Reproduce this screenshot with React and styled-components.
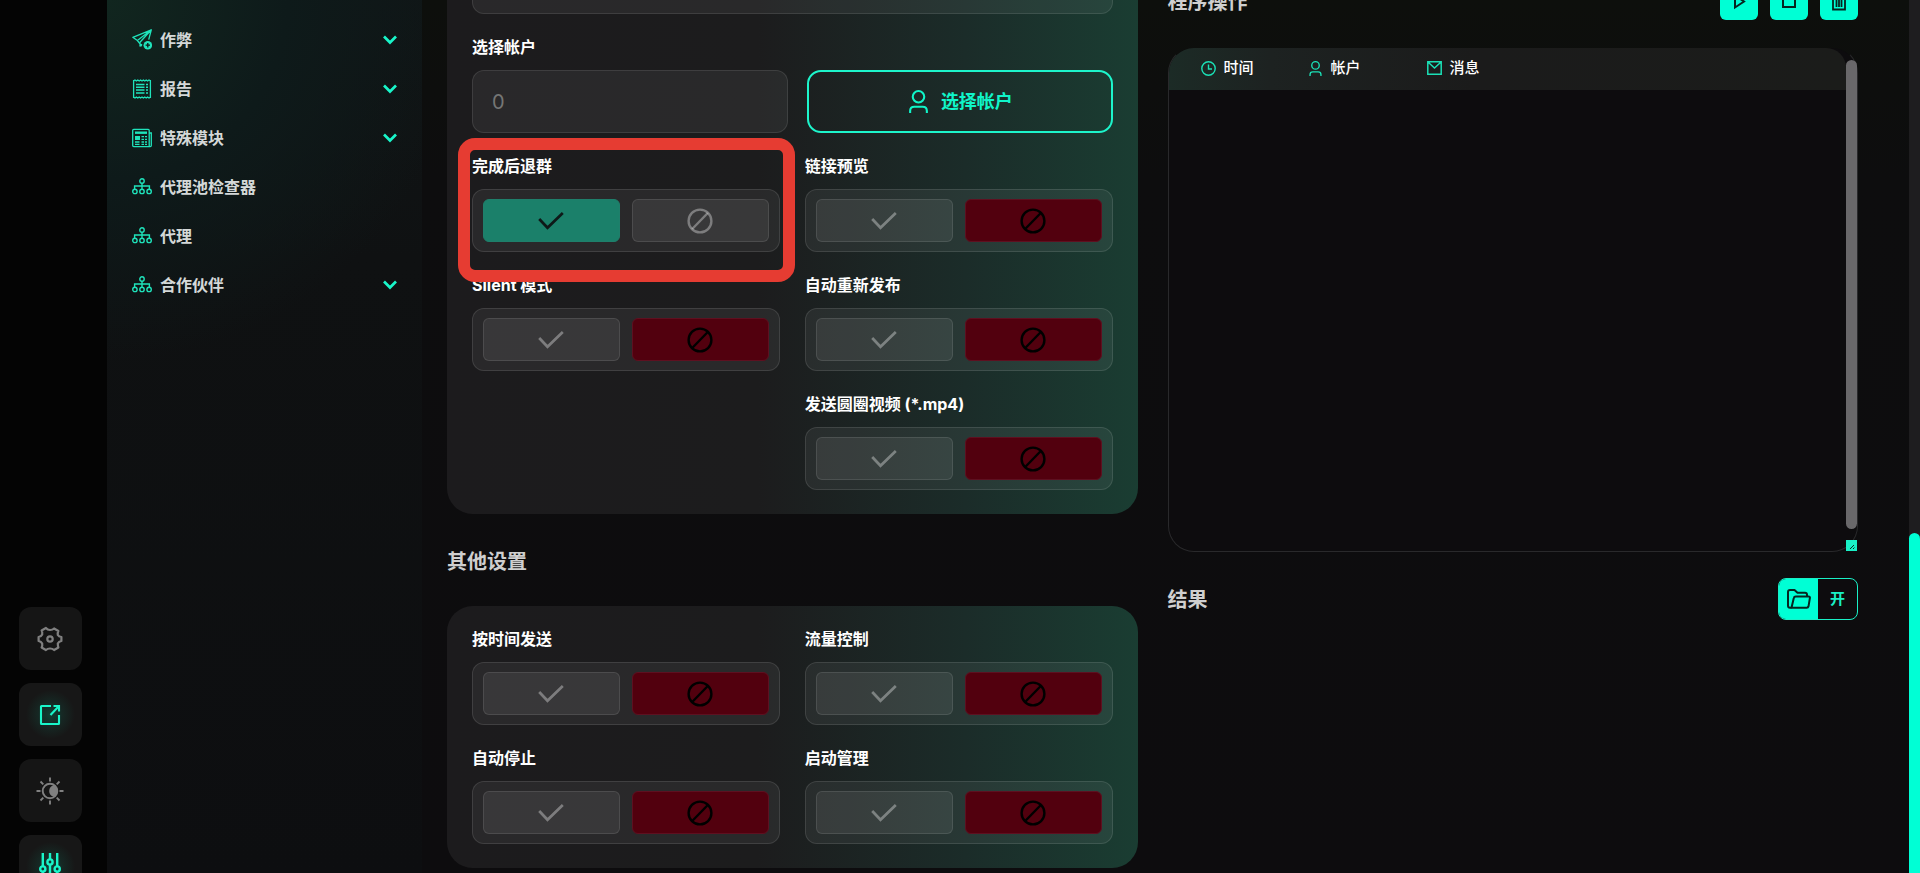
import React, { useState } from "react";
import styled, { createGlobalStyle } from "styled-components";

const menuList = [
  { id: "cheat", name: "作弊", icon: "plane", more: true },
  { id: "report", name: "报告", icon: "receipt", more: true },
  { id: "special", name: "特殊模块", icon: "news", more: true },
  { id: "pool", name: "代理池检查器", icon: "tree", more: false },
  { id: "proxy", name: "代理", icon: "tree", more: false },
  { id: "partner", name: "合作伙伴", icon: "tree", more: true },
];

const railList = [
  { id: "settings", name: "设置", icon: "gear", on: false },
  { id: "window", name: "窗口", icon: "external", on: true },
  { id: "theme", name: "主题", icon: "sun", on: false },
  { id: "filters", name: "调整", icon: "sliders", on: true },
];

const sendOptions = [
  { id: "leave", label: "完成后退群", value: true, marked: true },
  { id: "preview", label: "链接预览", value: false },
  { id: "silent", label: "Silent 模式", value: false },
  { id: "repost", label: "自动重新发布", value: false },
  { id: "round", label: "发送圆圈视频 (*.mp4)", value: false, right: true },
];

const otherOptions = [
  { id: "byTime", label: "按时间发送", value: false },
  { id: "traffic", label: "流量控制", value: false },
  { id: "autoStop", label: "自动停止", value: false },
  { id: "startup", label: "启动管理", value: false },
];

const icons = {
  plane: (
    <svg width="20" height="21" viewBox="0 0 20 21" fill="none" stroke="currentColor" strokeWidth="1.3" strokeLinejoin="round">
      <path d="M19.3.8.8 8.300l4.600 3.200L19.300.8 8 13.200M5.400 11.500l4.400 5.600M8 13.200v3.900l2-2M19.300.8l-2.600 9.800" />
      <circle cx="15.8" cy="16.2" r="4.3" fill="currentColor" stroke="none" />
      <path d="M15.8 14v4.400M13.600 16.200H18" stroke="#0d1917" />
    </svg>
  ),
  receipt: (
    <svg width="20" height="20" viewBox="0 0 20 20" fill="none" stroke="currentColor" strokeWidth="1.3">
      <path d="M1.600 1v18M18.400 1v18" />
      <path d="M1.6 1.8 3 1l1.4 1L5.8 1l1.4 1 1.4-1L10 2l1.4-1 1.4 1 1.4-1 1.4 1L17 1l1.4.8M1.6 18.2 3 19l1.4-1 1.4 1 1.4-1 1.4 1 1.4-1 1.4 1 1.4-1 1.4 1 1.4-1 1.4 1 1.4-.8" />
      <path d="M4 5.500h8.500M4 8.300h8.500M4 11.100h8.500M4 13.900h8.500M14 5.500h2M14 8.300h2M14 11.100h2M14 13.900h2" strokeWidth="1.5" />
    </svg>
  ),
  news: (
    <svg width="20" height="20" viewBox="0 0 20 20" fill="none" stroke="currentColor" strokeWidth="1.3">
      <path d="M17.200 16.400V2.400a1 1 0 0 0-1-1H1.700a1 1 0 0 0-1 1v15.200a1 1 0 0 0 1 1h16.600a1 1 0 0 0 1-1V5h-2.100v12.400c0 .6.4 1.200 1 1.200" />
      <path d="M3 4.700h12" strokeWidth="2.4" />
      <rect x="3" y="8" width="5" height="4" fill="currentColor" stroke="none" />
      <path d="M9.500 8.600H12M13 8.600h2M9.500 11.400H12M13 11.400h2M3 14h4.500M9.500 14H12M13 14h2M3 16.400h4.500M9.500 16.400H12M13 16.400h2" />
    </svg>
  ),
  tree: (
    <svg width="20" height="17" viewBox="0 0 20 17" fill="none" stroke="currentColor" strokeWidth="1.4">
      <circle cx="10" cy="3" r="2.2" />
      <circle cx="2.9" cy="13.4" r="2.2" />
      <circle cx="10" cy="13.4" r="2.2" />
      <circle cx="17.1" cy="13.4" r="2.2" />
      <path d="M10 5.300v5.800M2.600 11V8h14.800v3" />
    </svg>
  ),
  chevron: (
    <svg width="14" height="10" viewBox="0 0 14 10" fill="none" stroke="currentColor" strokeWidth="2.7">
      <path d="M1 1.500l6 6 6-6" />
    </svg>
  ),
  gear: (
    <svg width="26" height="26" viewBox="0 0 26 26" fill="none" stroke="currentColor" strokeWidth="2.2" strokeLinejoin="round">
      <path d="M24.4 11v4q-2.600.4-3.600 2.500 0 2.500.6 4l-4.300 2.500q-1.600-1.500-4.100-1.500t-4.100 1.500l-4.300-2.500q1-1.500.6-4-1-2.100-3.600-2.500v-4q2.600-.4 3.600-2.500.4-2.500-.6-4l4.300-2.500Q10.500 4 13 4t4.100-1.500l4.300 2.500q-.9 1.500-.6 4 1 1.600 3.600 2Z" />
      <circle cx="13" cy="13" r="2.700" />
    </svg>
  ),
  external: (
    <svg width="22" height="22" viewBox="0 0 22 22" fill="none" stroke="currentColor" strokeWidth="2.1">
      <path d="M12 2H2.500Q2 2 2 2.500v17q0 .5.500.5h17q.5 0 .5-.5V11M14.500 2H20v5.500M20 2l-8.500 9" />
    </svg>
  ),
  sun: (
    <svg width="28" height="28" viewBox="0 0 28 28" fill="none" stroke="currentColor" strokeWidth="1.9">
      <circle cx="14" cy="14" r="7.300" />
      <path d="M18.500 8.200a6.800 6.800 0 0 1 0 11.600c-3 0-5.300-2.600-5.300-5.800s2.300-5.800 5.300-5.800Z" fill="currentColor" stroke="none" />
      <path d="M14 .5v4M14 23.500v4M.5 14h4M23.500 14h4M4.500 4.500l2.800 2.800M20.700 20.700l2.800 2.800M4.500 23.500l2.800-2.800M20.700 7.300l2.800-2.800" />
    </svg>
  ),
  sliders: (
    <svg width="22" height="28" viewBox="0 0 22 28" fill="none" stroke="currentColor" strokeWidth="2.4">
      <path d="M3.800 0v13M11 0v6M18.200 0v13M3.800 19v9M11 12v16M18.200 19v9" />
      <circle cx="3.800" cy="16" r="2.600" />
      <circle cx="11" cy="9" r="2.600" />
      <circle cx="18.200" cy="16" r="2.600" />
    </svg>
  ),
  check: (
    <svg width="26" height="20" viewBox="0 0 26 20" fill="none" stroke="currentColor" strokeWidth="2.7">
      <path d="M1.200 8l8.300 8.800L24.800 2" />
    </svg>
  ),
  ban: (
    <svg width="26" height="26" viewBox="0 0 26 26" fill="none" stroke="currentColor" strokeWidth="2.4">
      <circle cx="13" cy="13" r="11.400" />
      <path d="M5.200 21 20.800 5" />
    </svg>
  ),
  play: (
    <svg width="14" height="18" viewBox="0 0 14 18" fill="none" stroke="currentColor" strokeWidth="2">
      <path d="M3 3.500v12l9-6Z" />
    </svg>
  ),
  stop: (
    <svg width="14" height="16" viewBox="0 0 14 16" fill="none" stroke="currentColor" strokeWidth="2">
      <path d="M1 1h12v13H1z" />
    </svg>
  ),
  trash: (
    <svg width="16" height="20" viewBox="0 0 16 20" fill="none" stroke="currentColor" strokeWidth="1.8">
      <path d="M0 4h16M5 4V1h6v3M2 4v14.500h12V4M5.500 6.500v9.500M8 6.500v9.500M10.500 6.500v9.500" />
    </svg>
  ),
  folder: (
    <svg width="24" height="20" viewBox="0 0 24 20" fill="none" stroke="currentColor" strokeWidth="2" strokeLinejoin="round">
      <path d="M4.500 18.800H3q-2 0-2-2V3q0-2 2-2h4.500l3 2.800H18q2 0 2 2v1.400" />
      <path d="M4.500 18.800 6.800 9q.3-1.600 2-1.600H21.500q1.700 0 1.400 1.600l-1.400 8.300q-.3 1.500-1.800 1.500Z" />
    </svg>
  ),
  clock: (
    <svg width="15" height="15" viewBox="0 0 15 15" fill="none" stroke="currentColor" strokeWidth="1.4">
      <circle cx="7.500" cy="7.500" r="6.700" />
      <path d="M7.500 3.500V8H11" />
    </svg>
  ),
  mail: (
    <svg width="15" height="14" viewBox="0 0 15 14" fill="none" stroke="currentColor" strokeWidth="1.5">
      <path d="M.8.8h13.400v12.400H.8zM1.500 1.500l6 5.500 6-5.500" />
    </svg>
  ),
};

function UserIcon({ size, stroke }) {
  return (
    <svg width={size} height={size} viewBox="0 0 22 22" fill="none" stroke="currentColor" strokeWidth={stroke}>
      <circle cx="11" cy="6.500" r="5.500" />
      <path d="M3 22v-2q0-4 4-4h8q4 0 4 4v2" />
    </svg>
  );
}

function Option({ item }) {
  const [value, setValue] = useState(item.value);
  const labelId = item.id + "-label";

  return (
    <Cell $marked={item.marked} $right={item.right}>
      <Label as="span" id={labelId}>{item.label}</Label>
      <Toggle role="group" aria-labelledby={labelId}>
        <YesButton type="button" aria-label="是" aria-pressed={value} $on={value} onClick={() => setValue(true)}>
          {icons.check}
        </YesButton>
        <NoButton type="button" aria-label="否" aria-pressed={!value} $on={!value} onClick={() => setValue(false)}>
          {icons.ban}
        </NoButton>
      </Toggle>
    </Cell>
  );
}

function App() {
  return (
    <Page>
      <GlobalStyle />
      <Rail>
        <RailList>
          {railList.map((item) => (
            <RailButton key={item.id} type="button" aria-label={item.name} $on={item.on}>
              {icons[item.icon]}
            </RailButton>
          ))}
        </RailList>
      </Rail>

      <Sidebar>
        {menuList.map((item) => (
          <MenuLink key={item.id} href={"#" + item.id}>
            <MenuIcon>{icons[item.icon]}</MenuIcon>
            <span>{item.name}</span>
            {item.more && <MenuArrow>{icons.chevron}</MenuArrow>}
          </MenuLink>
        ))}
      </Sidebar>

      <Content>
        <Column>
          <Card>
            <TopField aria-label="消息内容" />
            <div>
              <Label htmlFor="accounts">选择帐户</Label>
              <AccountRow>
                <TextInput id="accounts" placeholder="0" />
                <AccountButton type="button">
                  <UserIcon size={23} stroke={2} />
                  选择帐户
                </AccountButton>
              </AccountRow>
            </div>
            <Options>
              {sendOptions.map((item) => (
                <Option key={item.id} item={item} />
              ))}
            </Options>
          </Card>
          <CardTitle>其他设置</CardTitle>
          <Card>
            <Options>
              {otherOptions.map((item) => (
                <Option key={item.id} item={item} />
              ))}
            </Options>
          </Card>
        </Column>

        <ActionColumn>
          <TitleRow>
            <Title>程序操作</Title>
            <Actions>
              <ActionButton type="button" aria-label="开始">{icons.play}</ActionButton>
              <ActionButton type="button" aria-label="停止">{icons.stop}</ActionButton>
              <ActionButton type="button" aria-label="清除">{icons.trash}</ActionButton>
            </Actions>
          </TitleRow>
          <LogPanel>
            <LogTable>
              <thead>
                <tr>
                  <LogHead $width="107px"><HeadText>{icons.clock}时间</HeadText></LogHead>
                  <LogHead $width="119px"><HeadText><UserIcon size={15} stroke={2} />帐户</HeadText></LogHead>
                  <LogHead><HeadText>{icons.mail}消息</HeadText></LogHead>
                </tr>
              </thead>
            </LogTable>
            <LogScroll>
              <LogThumb />
              <Resizer>
                <svg width="11" height="11" viewBox="0 0 11 11" fill="none" stroke="#0c2a24" strokeWidth="1">
                  <path d="M4 9l4-4M7 9l1.500-1.500" />
                </svg>
              </Resizer>
            </LogScroll>
          </LogPanel>
          <TitleRow>
            <Title>结果</Title>
            <OpenButton type="button">
              <OpenIcon>{icons.folder}</OpenIcon>
              <OpenText>开</OpenText>
            </OpenButton>
          </TitleRow>
        </ActionColumn>
      </Content>

      <PageScroll>
        <PageThumb />
      </PageScroll>
    </Page>
  );
}

export default App;

const GlobalStyle = createGlobalStyle`
  * {
    box-sizing: border-box;
  }
  body {
    margin: 0;
    background: #0d0c0e;
    color: #fff;
    font-family: Inter, "Noto Sans CJK SC", sans-serif;
    font-size: 16px;
  }
  button, input, textarea {
    font-family: inherit;
  }
  button {
    cursor: pointer;
    padding: 0;
  }
  svg {
    display: block;
    flex: none;
  }
`;

const Page = styled.div`
  display: flex;
  height: 100vh;
  overflow: hidden;
  background: linear-gradient(180deg, #0d0f0c 0, #0d0d0e 180px, #0d0c0e 100%);
`;

const Rail = styled.nav`
  flex: 0 0 107px;
  display: flex;
  flex-direction: column;
  justify-content: flex-end;
  align-items: center;
  padding-right: 7px;
  background: #040404;
`;

const RailList = styled.div`
  display: flex;
  flex-direction: column;
  gap: 13px;
  margin-bottom: -25px;
`;

const RailButton = styled.button`
  display: flex;
  align-items: center;
  justify-content: center;
  width: 63px;
  height: 63px;
  border: 0;
  border-radius: 12px;
  background: ${(props) => (props.$on ? "radial-gradient(circle, #0f4035 0, #162723 28%, #171717 55%)" : "#151515")};
  color: ${(props) => (props.$on ? "#19f5c9" : "#808080")};
`;

const Sidebar = styled.nav`
  flex: 0 0 315px;
  padding: 15px 25px;
  background: radial-gradient(360px 360px at 0 0, #11261f 0, #0e1a1a 50%, rgba(14, 18, 19, 0) 100%),
    linear-gradient(180deg, #101516 0, #0f1112 260px, #0d0e10 100%);
`;

const MenuLink = styled.a`
  display: flex;
  align-items: center;
  gap: 8px;
  height: 49px;
  color: #d4d8d8;
  font-size: 16px;
  font-weight: 700;
  line-height: 20px;
  text-decoration: none;
`;

const MenuIcon = styled.span`
  color: #1fe3bb;
`;

const MenuArrow = styled.span`
  margin-left: auto;
  color: #19f5c9;
`;

const Content = styled.main`
  flex: 1;
  display: grid;
  grid-template-columns: 1fr 1fr;
  gap: 30px;
  align-items: start;
  margin-top: -72px;
  padding: 0 51px 0 25px;
`;

const Column = styled.div`
  min-width: 0;
`;

const Card = styled.section`
  display: grid;
  gap: 23px;
  padding: 23px 25px 24px;
  border-radius: 26px;
  background: linear-gradient(90deg, #1c1b1d 0, #1c1c1d 45%, #1b2c29 75%, #1a3d32 100%);
`;

const TopField = styled.textarea`
  display: block;
  width: 100%;
  height: 63px;
  border: 1px solid rgba(255, 255, 255, 0.1);
  border-radius: 12px;
  background: rgba(255, 255, 255, 0.06);
  color: #fff;
  resize: none;
`;

const Label = styled.label`
  display: block;
  margin-bottom: 13px;
  font-size: 16px;
  font-weight: 700;
  line-height: 20px;
`;

const AccountRow = styled.div`
  display: grid;
  grid-template-columns: 316fr 305fr;
  gap: 19px;
`;

const TextInput = styled.input`
  width: 100%;
  height: 63px;
  padding: 0 19px;
  border: 1px solid rgba(255, 255, 255, 0.1);
  border-radius: 12px;
  background: rgba(255, 255, 255, 0.06);
  color: #fff;
  font-size: 20px;

  &::placeholder {
    color: #757675;
    opacity: 1;
  }
`;

const AccountButton = styled.button`
  display: flex;
  align-items: center;
  justify-content: center;
  gap: 11px;
  border: 2px solid #1df5cb;
  border-radius: 14px;
  background: transparent;
  color: #10f5c9;
  font-size: 18px;
  font-weight: 700;
  line-height: 20px;
`;

const Options = styled.div`
  display: grid;
  grid-template-columns: 1fr 1fr;
  gap: 23px 25px;
`;

const Cell = styled.div`
  position: relative;
  ${(props) => props.$right && "grid-column: 2;"}

  ${(props) =>
    props.$marked &&
    `
    z-index: 1;
    &::after {
      content: "";
      position: absolute;
      top: -18px;
      right: -15px;
      bottom: -30px;
      left: -14px;
      border: 12px solid #e63c32;
      border-radius: 17px;
      pointer-events: none;
    }
  `}
`;

const Toggle = styled.div`
  display: grid;
  grid-template-columns: 1fr 1fr;
  gap: 12px;
  height: 63px;
  padding: 9px 10px;
  border: 1px solid rgba(255, 255, 255, 0.11);
  border-radius: 12px;
  background: rgba(255, 255, 255, 0.06);
`;

const ToggleButton = styled.button`
  display: flex;
  align-items: center;
  justify-content: center;
  border: 1px solid rgba(255, 255, 255, 0.1);
  border-radius: 6px;
  background: rgba(255, 255, 255, 0.07);
  color: rgba(255, 255, 255, 0.35);
`;

const YesButton = styled(ToggleButton)`
  ${(props) => props.$on && "background: #1b806a; border-color: #1f7f6b; color: #0e1918;"}
`;

const NoButton = styled(ToggleButton)`
  ${(props) => props.$on && "background: #52000e; border-color: #5e1020; color: #000;"}
`;

const Title = styled.h2`
  margin: 0;
  padding-top: 2px;
  color: #cfcfcf;
  font-size: 20px;
  font-weight: 700;
  line-height: 28px;
`;

const CardTitle = styled(Title)`
  margin: 32px 0 30px;
`;

const ActionColumn = styled(Column)`
  padding-top: 54px;
`;

const TitleRow = styled.div`
  display: flex;
  align-items: center;
  justify-content: space-between;
`;

const Actions = styled.div`
  display: flex;
  gap: 12px;
`;

const ActionButton = styled.button`
  display: flex;
  align-items: center;
  justify-content: center;
  width: 38px;
  height: 38px;
  border: 0;
  border-radius: 6px;
  background: #00ffd5;
  color: #06251f;
`;

const LogPanel = styled.div`
  display: flex;
  height: 505px;
  margin: 27px 0 26px;
  border: 1px solid #29292b;
  border-top-color: transparent;
  border-radius: 26px;
  background: #0d0c0e;
  background-clip: padding-box;
`;

const LogTable = styled.table`
  flex: 1;
  align-self: flex-start;
  table-layout: fixed;
  border-collapse: collapse;
  border-radius: 25px 20px 0 0;
  overflow: hidden;
  background: linear-gradient(90deg, #1c2b26 0, #1d2221 15%, #1b1b1b 45%, #1b1c1a 100%);
`;

const LogHead = styled.th`
  width: ${(props) => props.$width || "auto"};
  height: 42px;
  padding: 0 0 2px 32px;
  font-size: 15px;
  font-weight: 500;
  line-height: 20px;
  text-align: left;
`;

const HeadText = styled.span`
  display: flex;
  align-items: center;
  gap: 8px;

  svg {
    color: #1be0b6;
  }
`;

const LogScroll = styled.div`
  flex: 0 0 11px;
  display: flex;
  flex-direction: column;
  justify-content: space-between;
  padding-top: 12px;
`;

const LogThumb = styled.div`
  height: 469px;
  border-radius: 6px;
  background: #69686a;
`;

const Resizer = styled.div`
  height: 11px;
  background: #19f0c6;
`;

const OpenButton = styled.button`
  display: grid;
  grid-template-columns: 1fr 1fr;
  width: 80px;
  height: 42px;
  border: 1px solid #19f0c6;
  border-radius: 8px;
  overflow: hidden;
  background: #0d0c0e;
`;

const OpenIcon = styled.span`
  display: flex;
  align-items: center;
  justify-content: center;
  height: 100%;
  background: #00ffd5;
  color: #06251f;
`;

const OpenText = styled.span`
  align-self: center;
  color: #19f0c6;
  font-size: 15px;
  font-weight: 700;
  line-height: 20px;
`;

const PageScroll = styled.div`
  flex: 0 0 11px;
  display: flex;
  align-items: flex-end;
  background: #1e1d1f;
`;

const PageThumb = styled.div`
  width: 100%;
  height: 39%;
  border-radius: 6px 6px 0 0;
  background: #00ffd5;
`;
